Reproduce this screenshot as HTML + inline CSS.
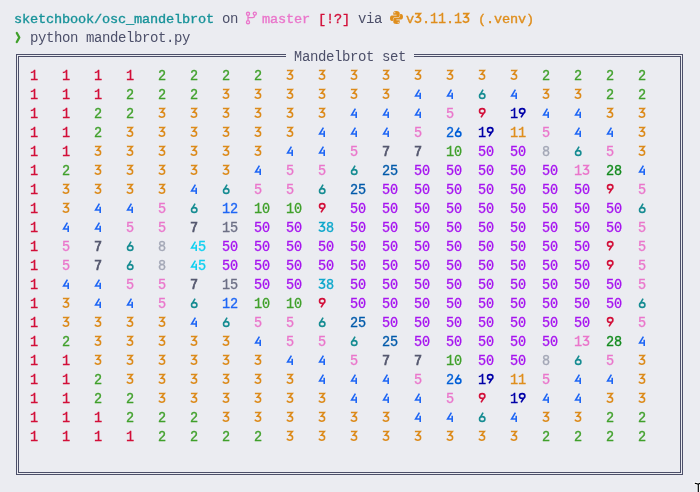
<!DOCTYPE html>
<html><head><meta charset="utf-8"><style>
html,body{margin:0;padding:0;}
body{width:700px;height:492px;overflow:hidden;background:#ebecf1;position:relative;font-family:"Liberation Mono",monospace;}
#w{position:absolute;left:0;top:0;width:700px;height:492px;will-change:transform;}
.t{position:absolute;white-space:pre;line-height:19px;}
.n{position:absolute;white-space:pre;font-size:15.00px;line-height:19px;letter-spacing:-0.11px;-webkit-text-stroke:0.35px currentColor;transform:scaleX(0.9);transform-origin:0 0;}
.g{position:absolute;overflow:visible;}
.g path{fill:none;stroke-width:1.6;}
.b{-webkit-text-stroke:0.35px currentColor;}
.box{position:absolute;border:1px solid #4c4f69;box-sizing:border-box;}
</style></head><body>
<div id="w">
<div class="t b" style="left:14px;top:9.88px;color:#179299;font-size:13.60px;letter-spacing:-0.16px">sketchbook/osc_mandelbrot</div>
<div class="t" style="left:222px;top:9.77px;color:#4c4f69;font-size:14.00px;letter-spacing:-0.40px">on</div>
<div class="t b" style="left:262px;top:9.88px;color:#ea76cb;font-size:13.60px;letter-spacing:-0.16px">master</div>
<div class="t b" style="left:318px;top:9.88px;color:#d20f39;font-size:13.60px;letter-spacing:-0.16px">[!?]</div>
<div class="t" style="left:358px;top:9.77px;color:#4c4f69;font-size:14.00px;letter-spacing:-0.40px">via</div>
<div class="t b" style="left:406px;top:9.88px;color:#df8e1d;font-size:13.60px;letter-spacing:-0.16px">v</div>
<svg class="g" style="left:414px;top:11px" width="8" height="14" viewBox="0 -12 8 14"><path d="M0.9 -9.45 H6.3 L3.4 -5.9 H3.8 C5.6 -5.9 6.6 -4.7 6.6 -3.2 C6.6 -1.6 5.4 -0.75 3.7 -0.75 C2.4 -0.75 1.4 -1.3 0.9 -2.3" stroke="#df8e1d" style="stroke-width:1.75"/></svg>
<div class="t b" style="left:422px;top:9.88px;color:#df8e1d;font-size:13.60px;letter-spacing:-0.16px">.</div>
<div class="t b" style="left:430.00px;top:9.56px;color:#df8e1d;font-size:14.80px;transform:scaleX(0.9);transform-origin:0 0">1</div>
<div class="t b" style="left:438.00px;top:9.56px;color:#df8e1d;font-size:14.80px;transform:scaleX(0.9);transform-origin:0 0">1</div>
<div class="t b" style="left:446px;top:9.88px;color:#df8e1d;font-size:13.60px;letter-spacing:-0.16px">.</div>
<div class="t b" style="left:454.00px;top:9.56px;color:#df8e1d;font-size:14.80px;transform:scaleX(0.9);transform-origin:0 0">1</div>
<svg class="g" style="left:462px;top:11px" width="8" height="14" viewBox="0 -12 8 14"><path d="M0.9 -9.45 H6.3 L3.4 -5.9 H3.8 C5.6 -5.9 6.6 -4.7 6.6 -3.2 C6.6 -1.6 5.4 -0.75 3.7 -0.75 C2.4 -0.75 1.4 -1.3 0.9 -2.3" stroke="#df8e1d" style="stroke-width:1.75"/></svg>
<div class="t b" style="left:470px;top:9.88px;color:#df8e1d;font-size:13.60px;letter-spacing:-0.16px"> (.venv)</div>
<svg style="position:absolute;left:14px;top:30px" width="8" height="15" viewBox="0 0 8 15"><path d="M2.8 3 L5.3 7.5 L2.8 12" fill="none" stroke="#40a02b" stroke-width="2.3" stroke-linecap="round" stroke-linejoin="round"/></svg>
<div class="t" style="left:30px;top:28.77px;color:#4c4f69;font-size:14.00px;letter-spacing:-0.40px">python mandelbrot.py</div>
<svg style="position:absolute;left:245px;top:11px" width="13" height="14" viewBox="0 0 13 14">
<g fill="none" stroke="#ea76cb" stroke-width="1.35">
<circle cx="3" cy="2.8" r="1.55"/><circle cx="9.8" cy="2.6" r="1.55"/><circle cx="3" cy="11.2" r="1.55"/>
<path d="M3 4.3 V9.6 M9.6 4.1 V5 Q9.4 6.6 7.8 6.6 H3"/>
</g></svg>
<svg style="position:absolute;left:389px;top:10px" width="15" height="15" viewBox="0 0 15 15">
<g fill="#df8e1d">
<path d="M7.3 1 C4.6 1 4.3 2 4.3 3.3 V4.8 H7.6 V5.4 H2.8 C1.6 5.4 1 6.6 1 8.2 C1 9.9 1.7 11 2.9 11 H3.9 V9.3 C3.9 8.1 4.9 7.2 6 7.2 H9 C10 7.2 10.7 6.4 10.7 5.4 V3.3 C10.7 2 9.8 1 7.3 1 Z"/>
<path d="M7.7 14 C10.4 14 10.7 13 10.7 11.7 V10.2 H7.4 V9.6 H12.2 C13.4 9.6 14 8.4 14 6.8 C14 5.1 13.3 4 12.1 4 H11.1 V5.7 C11.1 6.9 10.1 7.8 9 7.8 H6 C5 7.8 4.3 8.6 4.3 9.6 V11.7 C4.3 13 5.2 14 7.7 14 Z"/>
</g>
<circle cx="5.8" cy="2.7" r="0.6" fill="#ebecf1"/><circle cx="9.2" cy="12.3" r="0.6" fill="#ebecf1"/>
</svg>
<div class="box" style="left:16px;top:54px;width:667px;height:421px"></div>
<div class="box" style="left:18px;top:56px;width:663px;height:417px"></div>
<div style="position:absolute;left:286px;top:52px;width:128px;height:7px;background:#ebecf1"></div>
<div class="t" style="left:293.95px;top:47.51px;color:#4c4f69;font-size:15.00px;transform:scaleX(0.9);transform-origin:0 0">M</div>
<div class="t" style="left:302px;top:47.77px;color:#4c4f69;font-size:14.00px;letter-spacing:-0.40px">andelbrot set</div>
<div class="n" style="left:30px;top:66.51px;color:#d20f39">1</div>
<div class="n" style="left:62px;top:66.51px;color:#d20f39">1</div>
<div class="n" style="left:94px;top:66.51px;color:#d20f39">1</div>
<div class="n" style="left:126px;top:66.51px;color:#d20f39">1</div>
<div class="n" style="left:158px;top:66.51px;color:#40a02b">2</div>
<div class="n" style="left:190px;top:66.51px;color:#40a02b">2</div>
<div class="n" style="left:222px;top:66.51px;color:#40a02b">2</div>
<div class="n" style="left:254px;top:66.51px;color:#40a02b">2</div>
<svg class="g" style="left:286px;top:68px" width="8" height="14" viewBox="0 -12 8 14"><path d="M0.9 -9.45 H6.3 L3.4 -5.9 H3.8 C5.6 -5.9 6.6 -4.7 6.6 -3.2 C6.6 -1.6 5.4 -0.75 3.7 -0.75 C2.4 -0.75 1.4 -1.3 0.9 -2.3" stroke="#dc8a1a"/></svg>
<svg class="g" style="left:318px;top:68px" width="8" height="14" viewBox="0 -12 8 14"><path d="M0.9 -9.45 H6.3 L3.4 -5.9 H3.8 C5.6 -5.9 6.6 -4.7 6.6 -3.2 C6.6 -1.6 5.4 -0.75 3.7 -0.75 C2.4 -0.75 1.4 -1.3 0.9 -2.3" stroke="#dc8a1a"/></svg>
<svg class="g" style="left:350px;top:68px" width="8" height="14" viewBox="0 -12 8 14"><path d="M0.9 -9.45 H6.3 L3.4 -5.9 H3.8 C5.6 -5.9 6.6 -4.7 6.6 -3.2 C6.6 -1.6 5.4 -0.75 3.7 -0.75 C2.4 -0.75 1.4 -1.3 0.9 -2.3" stroke="#dc8a1a"/></svg>
<svg class="g" style="left:382px;top:68px" width="8" height="14" viewBox="0 -12 8 14"><path d="M0.9 -9.45 H6.3 L3.4 -5.9 H3.8 C5.6 -5.9 6.6 -4.7 6.6 -3.2 C6.6 -1.6 5.4 -0.75 3.7 -0.75 C2.4 -0.75 1.4 -1.3 0.9 -2.3" stroke="#dc8a1a"/></svg>
<svg class="g" style="left:414px;top:68px" width="8" height="14" viewBox="0 -12 8 14"><path d="M0.9 -9.45 H6.3 L3.4 -5.9 H3.8 C5.6 -5.9 6.6 -4.7 6.6 -3.2 C6.6 -1.6 5.4 -0.75 3.7 -0.75 C2.4 -0.75 1.4 -1.3 0.9 -2.3" stroke="#dc8a1a"/></svg>
<svg class="g" style="left:446px;top:68px" width="8" height="14" viewBox="0 -12 8 14"><path d="M0.9 -9.45 H6.3 L3.4 -5.9 H3.8 C5.6 -5.9 6.6 -4.7 6.6 -3.2 C6.6 -1.6 5.4 -0.75 3.7 -0.75 C2.4 -0.75 1.4 -1.3 0.9 -2.3" stroke="#dc8a1a"/></svg>
<svg class="g" style="left:478px;top:68px" width="8" height="14" viewBox="0 -12 8 14"><path d="M0.9 -9.45 H6.3 L3.4 -5.9 H3.8 C5.6 -5.9 6.6 -4.7 6.6 -3.2 C6.6 -1.6 5.4 -0.75 3.7 -0.75 C2.4 -0.75 1.4 -1.3 0.9 -2.3" stroke="#dc8a1a"/></svg>
<svg class="g" style="left:510px;top:68px" width="8" height="14" viewBox="0 -12 8 14"><path d="M0.9 -9.45 H6.3 L3.4 -5.9 H3.8 C5.6 -5.9 6.6 -4.7 6.6 -3.2 C6.6 -1.6 5.4 -0.75 3.7 -0.75 C2.4 -0.75 1.4 -1.3 0.9 -2.3" stroke="#dc8a1a"/></svg>
<div class="n" style="left:542px;top:66.51px;color:#40a02b">2</div>
<div class="n" style="left:574px;top:66.51px;color:#40a02b">2</div>
<div class="n" style="left:606px;top:66.51px;color:#40a02b">2</div>
<div class="n" style="left:638px;top:66.51px;color:#40a02b">2</div>
<div class="n" style="left:30px;top:85.51px;color:#d20f39">1</div>
<div class="n" style="left:62px;top:85.51px;color:#d20f39">1</div>
<div class="n" style="left:94px;top:85.51px;color:#d20f39">1</div>
<div class="n" style="left:126px;top:85.51px;color:#40a02b">2</div>
<div class="n" style="left:158px;top:85.51px;color:#40a02b">2</div>
<div class="n" style="left:190px;top:85.51px;color:#40a02b">2</div>
<svg class="g" style="left:222px;top:87px" width="8" height="14" viewBox="0 -12 8 14"><path d="M0.9 -9.45 H6.3 L3.4 -5.9 H3.8 C5.6 -5.9 6.6 -4.7 6.6 -3.2 C6.6 -1.6 5.4 -0.75 3.7 -0.75 C2.4 -0.75 1.4 -1.3 0.9 -2.3" stroke="#dc8a1a"/></svg>
<svg class="g" style="left:254px;top:87px" width="8" height="14" viewBox="0 -12 8 14"><path d="M0.9 -9.45 H6.3 L3.4 -5.9 H3.8 C5.6 -5.9 6.6 -4.7 6.6 -3.2 C6.6 -1.6 5.4 -0.75 3.7 -0.75 C2.4 -0.75 1.4 -1.3 0.9 -2.3" stroke="#dc8a1a"/></svg>
<svg class="g" style="left:286px;top:87px" width="8" height="14" viewBox="0 -12 8 14"><path d="M0.9 -9.45 H6.3 L3.4 -5.9 H3.8 C5.6 -5.9 6.6 -4.7 6.6 -3.2 C6.6 -1.6 5.4 -0.75 3.7 -0.75 C2.4 -0.75 1.4 -1.3 0.9 -2.3" stroke="#dc8a1a"/></svg>
<svg class="g" style="left:318px;top:87px" width="8" height="14" viewBox="0 -12 8 14"><path d="M0.9 -9.45 H6.3 L3.4 -5.9 H3.8 C5.6 -5.9 6.6 -4.7 6.6 -3.2 C6.6 -1.6 5.4 -0.75 3.7 -0.75 C2.4 -0.75 1.4 -1.3 0.9 -2.3" stroke="#dc8a1a"/></svg>
<svg class="g" style="left:350px;top:87px" width="8" height="14" viewBox="0 -12 8 14"><path d="M0.9 -9.45 H6.3 L3.4 -5.9 H3.8 C5.6 -5.9 6.6 -4.7 6.6 -3.2 C6.6 -1.6 5.4 -0.75 3.7 -0.75 C2.4 -0.75 1.4 -1.3 0.9 -2.3" stroke="#dc8a1a"/></svg>
<svg class="g" style="left:382px;top:87px" width="8" height="14" viewBox="0 -12 8 14"><path d="M0.9 -9.45 H6.3 L3.4 -5.9 H3.8 C5.6 -5.9 6.6 -4.7 6.6 -3.2 C6.6 -1.6 5.4 -0.75 3.7 -0.75 C2.4 -0.75 1.4 -1.3 0.9 -2.3" stroke="#dc8a1a"/></svg>
<svg class="g" style="left:414px;top:87px" width="8" height="14" viewBox="0 -12 8 14"><path d="M5.4 -9.4 L1.6 -3.0 H6.9 M6.2 -6.2 V0" stroke="#1e66f5"/></svg>
<svg class="g" style="left:446px;top:87px" width="8" height="14" viewBox="0 -12 8 14"><path d="M5.4 -9.4 L1.6 -3.0 H6.9 M6.2 -6.2 V0" stroke="#1e66f5"/></svg>
<svg class="g" style="left:478px;top:87px" width="8" height="14" viewBox="0 -12 8 14"><path d="M5.1 -9.4 L1.8 -3.9 M1.5 -3.0 A2.7 2.4 0 1 0 6.9 -3.0 A2.7 2.4 0 1 0 1.5 -3.0" stroke="#168c92"/></svg>
<svg class="g" style="left:510px;top:87px" width="8" height="14" viewBox="0 -12 8 14"><path d="M5.4 -9.4 L1.6 -3.0 H6.9 M6.2 -6.2 V0" stroke="#1e66f5"/></svg>
<svg class="g" style="left:542px;top:87px" width="8" height="14" viewBox="0 -12 8 14"><path d="M0.9 -9.45 H6.3 L3.4 -5.9 H3.8 C5.6 -5.9 6.6 -4.7 6.6 -3.2 C6.6 -1.6 5.4 -0.75 3.7 -0.75 C2.4 -0.75 1.4 -1.3 0.9 -2.3" stroke="#dc8a1a"/></svg>
<svg class="g" style="left:574px;top:87px" width="8" height="14" viewBox="0 -12 8 14"><path d="M0.9 -9.45 H6.3 L3.4 -5.9 H3.8 C5.6 -5.9 6.6 -4.7 6.6 -3.2 C6.6 -1.6 5.4 -0.75 3.7 -0.75 C2.4 -0.75 1.4 -1.3 0.9 -2.3" stroke="#dc8a1a"/></svg>
<div class="n" style="left:606px;top:85.51px;color:#40a02b">2</div>
<div class="n" style="left:638px;top:85.51px;color:#40a02b">2</div>
<div class="n" style="left:30px;top:104.51px;color:#d20f39">1</div>
<div class="n" style="left:62px;top:104.51px;color:#d20f39">1</div>
<div class="n" style="left:94px;top:104.51px;color:#40a02b">2</div>
<div class="n" style="left:126px;top:104.51px;color:#40a02b">2</div>
<svg class="g" style="left:158px;top:106px" width="8" height="14" viewBox="0 -12 8 14"><path d="M0.9 -9.45 H6.3 L3.4 -5.9 H3.8 C5.6 -5.9 6.6 -4.7 6.6 -3.2 C6.6 -1.6 5.4 -0.75 3.7 -0.75 C2.4 -0.75 1.4 -1.3 0.9 -2.3" stroke="#dc8a1a"/></svg>
<svg class="g" style="left:190px;top:106px" width="8" height="14" viewBox="0 -12 8 14"><path d="M0.9 -9.45 H6.3 L3.4 -5.9 H3.8 C5.6 -5.9 6.6 -4.7 6.6 -3.2 C6.6 -1.6 5.4 -0.75 3.7 -0.75 C2.4 -0.75 1.4 -1.3 0.9 -2.3" stroke="#dc8a1a"/></svg>
<svg class="g" style="left:222px;top:106px" width="8" height="14" viewBox="0 -12 8 14"><path d="M0.9 -9.45 H6.3 L3.4 -5.9 H3.8 C5.6 -5.9 6.6 -4.7 6.6 -3.2 C6.6 -1.6 5.4 -0.75 3.7 -0.75 C2.4 -0.75 1.4 -1.3 0.9 -2.3" stroke="#dc8a1a"/></svg>
<svg class="g" style="left:254px;top:106px" width="8" height="14" viewBox="0 -12 8 14"><path d="M0.9 -9.45 H6.3 L3.4 -5.9 H3.8 C5.6 -5.9 6.6 -4.7 6.6 -3.2 C6.6 -1.6 5.4 -0.75 3.7 -0.75 C2.4 -0.75 1.4 -1.3 0.9 -2.3" stroke="#dc8a1a"/></svg>
<svg class="g" style="left:286px;top:106px" width="8" height="14" viewBox="0 -12 8 14"><path d="M0.9 -9.45 H6.3 L3.4 -5.9 H3.8 C5.6 -5.9 6.6 -4.7 6.6 -3.2 C6.6 -1.6 5.4 -0.75 3.7 -0.75 C2.4 -0.75 1.4 -1.3 0.9 -2.3" stroke="#dc8a1a"/></svg>
<svg class="g" style="left:318px;top:106px" width="8" height="14" viewBox="0 -12 8 14"><path d="M0.9 -9.45 H6.3 L3.4 -5.9 H3.8 C5.6 -5.9 6.6 -4.7 6.6 -3.2 C6.6 -1.6 5.4 -0.75 3.7 -0.75 C2.4 -0.75 1.4 -1.3 0.9 -2.3" stroke="#dc8a1a"/></svg>
<svg class="g" style="left:350px;top:106px" width="8" height="14" viewBox="0 -12 8 14"><path d="M5.4 -9.4 L1.6 -3.0 H6.9 M6.2 -6.2 V0" stroke="#1e66f5"/></svg>
<svg class="g" style="left:382px;top:106px" width="8" height="14" viewBox="0 -12 8 14"><path d="M5.4 -9.4 L1.6 -3.0 H6.9 M6.2 -6.2 V0" stroke="#1e66f5"/></svg>
<svg class="g" style="left:414px;top:106px" width="8" height="14" viewBox="0 -12 8 14"><path d="M5.4 -9.4 L1.6 -3.0 H6.9 M6.2 -6.2 V0" stroke="#1e66f5"/></svg>
<div class="n" style="left:446px;top:104.51px;color:#ea76cb">5</div>
<svg class="g" style="left:478px;top:106px" width="8" height="14" viewBox="0 -12 8 14"><path d="M1.5 -7.0 A2.7 2.4 0 1 0 6.9 -7.0 A2.7 2.4 0 1 0 1.5 -7.0 M6.7 -6.2 L3.0 -0.6" stroke="#d20f39"/></svg>
<div class="n" style="left:510px;top:104.51px;color:#0000a8">1</div>
<svg class="g" style="left:518px;top:106px" width="8" height="14" viewBox="0 -12 8 14"><path d="M1.5 -7.0 A2.7 2.4 0 1 0 6.9 -7.0 A2.7 2.4 0 1 0 1.5 -7.0 M6.7 -6.2 L3.0 -0.6" stroke="#0000a8"/></svg>
<svg class="g" style="left:542px;top:106px" width="8" height="14" viewBox="0 -12 8 14"><path d="M5.4 -9.4 L1.6 -3.0 H6.9 M6.2 -6.2 V0" stroke="#1e66f5"/></svg>
<svg class="g" style="left:574px;top:106px" width="8" height="14" viewBox="0 -12 8 14"><path d="M5.4 -9.4 L1.6 -3.0 H6.9 M6.2 -6.2 V0" stroke="#1e66f5"/></svg>
<svg class="g" style="left:606px;top:106px" width="8" height="14" viewBox="0 -12 8 14"><path d="M0.9 -9.45 H6.3 L3.4 -5.9 H3.8 C5.6 -5.9 6.6 -4.7 6.6 -3.2 C6.6 -1.6 5.4 -0.75 3.7 -0.75 C2.4 -0.75 1.4 -1.3 0.9 -2.3" stroke="#dc8a1a"/></svg>
<svg class="g" style="left:638px;top:106px" width="8" height="14" viewBox="0 -12 8 14"><path d="M0.9 -9.45 H6.3 L3.4 -5.9 H3.8 C5.6 -5.9 6.6 -4.7 6.6 -3.2 C6.6 -1.6 5.4 -0.75 3.7 -0.75 C2.4 -0.75 1.4 -1.3 0.9 -2.3" stroke="#dc8a1a"/></svg>
<div class="n" style="left:30px;top:123.51px;color:#d20f39">1</div>
<div class="n" style="left:62px;top:123.51px;color:#d20f39">1</div>
<div class="n" style="left:94px;top:123.51px;color:#40a02b">2</div>
<svg class="g" style="left:126px;top:125px" width="8" height="14" viewBox="0 -12 8 14"><path d="M0.9 -9.45 H6.3 L3.4 -5.9 H3.8 C5.6 -5.9 6.6 -4.7 6.6 -3.2 C6.6 -1.6 5.4 -0.75 3.7 -0.75 C2.4 -0.75 1.4 -1.3 0.9 -2.3" stroke="#dc8a1a"/></svg>
<svg class="g" style="left:158px;top:125px" width="8" height="14" viewBox="0 -12 8 14"><path d="M0.9 -9.45 H6.3 L3.4 -5.9 H3.8 C5.6 -5.9 6.6 -4.7 6.6 -3.2 C6.6 -1.6 5.4 -0.75 3.7 -0.75 C2.4 -0.75 1.4 -1.3 0.9 -2.3" stroke="#dc8a1a"/></svg>
<svg class="g" style="left:190px;top:125px" width="8" height="14" viewBox="0 -12 8 14"><path d="M0.9 -9.45 H6.3 L3.4 -5.9 H3.8 C5.6 -5.9 6.6 -4.7 6.6 -3.2 C6.6 -1.6 5.4 -0.75 3.7 -0.75 C2.4 -0.75 1.4 -1.3 0.9 -2.3" stroke="#dc8a1a"/></svg>
<svg class="g" style="left:222px;top:125px" width="8" height="14" viewBox="0 -12 8 14"><path d="M0.9 -9.45 H6.3 L3.4 -5.9 H3.8 C5.6 -5.9 6.6 -4.7 6.6 -3.2 C6.6 -1.6 5.4 -0.75 3.7 -0.75 C2.4 -0.75 1.4 -1.3 0.9 -2.3" stroke="#dc8a1a"/></svg>
<svg class="g" style="left:254px;top:125px" width="8" height="14" viewBox="0 -12 8 14"><path d="M0.9 -9.45 H6.3 L3.4 -5.9 H3.8 C5.6 -5.9 6.6 -4.7 6.6 -3.2 C6.6 -1.6 5.4 -0.75 3.7 -0.75 C2.4 -0.75 1.4 -1.3 0.9 -2.3" stroke="#dc8a1a"/></svg>
<svg class="g" style="left:286px;top:125px" width="8" height="14" viewBox="0 -12 8 14"><path d="M0.9 -9.45 H6.3 L3.4 -5.9 H3.8 C5.6 -5.9 6.6 -4.7 6.6 -3.2 C6.6 -1.6 5.4 -0.75 3.7 -0.75 C2.4 -0.75 1.4 -1.3 0.9 -2.3" stroke="#dc8a1a"/></svg>
<svg class="g" style="left:318px;top:125px" width="8" height="14" viewBox="0 -12 8 14"><path d="M5.4 -9.4 L1.6 -3.0 H6.9 M6.2 -6.2 V0" stroke="#1e66f5"/></svg>
<svg class="g" style="left:350px;top:125px" width="8" height="14" viewBox="0 -12 8 14"><path d="M5.4 -9.4 L1.6 -3.0 H6.9 M6.2 -6.2 V0" stroke="#1e66f5"/></svg>
<svg class="g" style="left:382px;top:125px" width="8" height="14" viewBox="0 -12 8 14"><path d="M5.4 -9.4 L1.6 -3.0 H6.9 M6.2 -6.2 V0" stroke="#1e66f5"/></svg>
<div class="n" style="left:414px;top:123.51px;color:#ea76cb">5</div>
<div class="n" style="left:446px;top:123.51px;color:#005fd7">2</div>
<svg class="g" style="left:454px;top:125px" width="8" height="14" viewBox="0 -12 8 14"><path d="M5.1 -9.4 L1.8 -3.9 M1.5 -3.0 A2.7 2.4 0 1 0 6.9 -3.0 A2.7 2.4 0 1 0 1.5 -3.0" stroke="#005fd7"/></svg>
<div class="n" style="left:478px;top:123.51px;color:#0000a8">1</div>
<svg class="g" style="left:486px;top:125px" width="8" height="14" viewBox="0 -12 8 14"><path d="M1.5 -7.0 A2.7 2.4 0 1 0 6.9 -7.0 A2.7 2.4 0 1 0 1.5 -7.0 M6.7 -6.2 L3.0 -0.6" stroke="#0000a8"/></svg>
<div class="n" style="left:510px;top:123.51px;color:#df8e1d">1</div>
<div class="n" style="left:518px;top:123.51px;color:#df8e1d">1</div>
<div class="n" style="left:542px;top:123.51px;color:#ea76cb">5</div>
<svg class="g" style="left:574px;top:125px" width="8" height="14" viewBox="0 -12 8 14"><path d="M5.4 -9.4 L1.6 -3.0 H6.9 M6.2 -6.2 V0" stroke="#1e66f5"/></svg>
<svg class="g" style="left:606px;top:125px" width="8" height="14" viewBox="0 -12 8 14"><path d="M5.4 -9.4 L1.6 -3.0 H6.9 M6.2 -6.2 V0" stroke="#1e66f5"/></svg>
<svg class="g" style="left:638px;top:125px" width="8" height="14" viewBox="0 -12 8 14"><path d="M0.9 -9.45 H6.3 L3.4 -5.9 H3.8 C5.6 -5.9 6.6 -4.7 6.6 -3.2 C6.6 -1.6 5.4 -0.75 3.7 -0.75 C2.4 -0.75 1.4 -1.3 0.9 -2.3" stroke="#dc8a1a"/></svg>
<div class="n" style="left:30px;top:142.51px;color:#d20f39">1</div>
<div class="n" style="left:62px;top:142.51px;color:#d20f39">1</div>
<svg class="g" style="left:94px;top:144px" width="8" height="14" viewBox="0 -12 8 14"><path d="M0.9 -9.45 H6.3 L3.4 -5.9 H3.8 C5.6 -5.9 6.6 -4.7 6.6 -3.2 C6.6 -1.6 5.4 -0.75 3.7 -0.75 C2.4 -0.75 1.4 -1.3 0.9 -2.3" stroke="#dc8a1a"/></svg>
<svg class="g" style="left:126px;top:144px" width="8" height="14" viewBox="0 -12 8 14"><path d="M0.9 -9.45 H6.3 L3.4 -5.9 H3.8 C5.6 -5.9 6.6 -4.7 6.6 -3.2 C6.6 -1.6 5.4 -0.75 3.7 -0.75 C2.4 -0.75 1.4 -1.3 0.9 -2.3" stroke="#dc8a1a"/></svg>
<svg class="g" style="left:158px;top:144px" width="8" height="14" viewBox="0 -12 8 14"><path d="M0.9 -9.45 H6.3 L3.4 -5.9 H3.8 C5.6 -5.9 6.6 -4.7 6.6 -3.2 C6.6 -1.6 5.4 -0.75 3.7 -0.75 C2.4 -0.75 1.4 -1.3 0.9 -2.3" stroke="#dc8a1a"/></svg>
<svg class="g" style="left:190px;top:144px" width="8" height="14" viewBox="0 -12 8 14"><path d="M0.9 -9.45 H6.3 L3.4 -5.9 H3.8 C5.6 -5.9 6.6 -4.7 6.6 -3.2 C6.6 -1.6 5.4 -0.75 3.7 -0.75 C2.4 -0.75 1.4 -1.3 0.9 -2.3" stroke="#dc8a1a"/></svg>
<svg class="g" style="left:222px;top:144px" width="8" height="14" viewBox="0 -12 8 14"><path d="M0.9 -9.45 H6.3 L3.4 -5.9 H3.8 C5.6 -5.9 6.6 -4.7 6.6 -3.2 C6.6 -1.6 5.4 -0.75 3.7 -0.75 C2.4 -0.75 1.4 -1.3 0.9 -2.3" stroke="#dc8a1a"/></svg>
<svg class="g" style="left:254px;top:144px" width="8" height="14" viewBox="0 -12 8 14"><path d="M0.9 -9.45 H6.3 L3.4 -5.9 H3.8 C5.6 -5.9 6.6 -4.7 6.6 -3.2 C6.6 -1.6 5.4 -0.75 3.7 -0.75 C2.4 -0.75 1.4 -1.3 0.9 -2.3" stroke="#dc8a1a"/></svg>
<svg class="g" style="left:286px;top:144px" width="8" height="14" viewBox="0 -12 8 14"><path d="M5.4 -9.4 L1.6 -3.0 H6.9 M6.2 -6.2 V0" stroke="#1e66f5"/></svg>
<svg class="g" style="left:318px;top:144px" width="8" height="14" viewBox="0 -12 8 14"><path d="M5.4 -9.4 L1.6 -3.0 H6.9 M6.2 -6.2 V0" stroke="#1e66f5"/></svg>
<div class="n" style="left:350px;top:142.51px;color:#ea76cb">5</div>
<div class="n" style="left:382px;top:142.51px;color:#55586f;-webkit-text-stroke-width:0.7px">7</div>
<div class="n" style="left:414px;top:142.51px;color:#55586f;-webkit-text-stroke-width:0.7px">7</div>
<div class="n" style="left:446px;top:142.51px;color:#40a02b">1</div>
<div class="n" style="left:454px;top:142.51px;color:#40a02b">0</div>
<div class="n" style="left:478px;top:142.51px;color:#a614ef">5</div>
<div class="n" style="left:486px;top:142.51px;color:#a614ef">0</div>
<div class="n" style="left:510px;top:142.51px;color:#a614ef">5</div>
<div class="n" style="left:518px;top:142.51px;color:#a614ef">0</div>
<div class="n" style="left:542px;top:142.51px;color:#a3a7b6">8</div>
<svg class="g" style="left:574px;top:144px" width="8" height="14" viewBox="0 -12 8 14"><path d="M5.1 -9.4 L1.8 -3.9 M1.5 -3.0 A2.7 2.4 0 1 0 6.9 -3.0 A2.7 2.4 0 1 0 1.5 -3.0" stroke="#168c92"/></svg>
<div class="n" style="left:606px;top:142.51px;color:#ea76cb">5</div>
<svg class="g" style="left:638px;top:144px" width="8" height="14" viewBox="0 -12 8 14"><path d="M0.9 -9.45 H6.3 L3.4 -5.9 H3.8 C5.6 -5.9 6.6 -4.7 6.6 -3.2 C6.6 -1.6 5.4 -0.75 3.7 -0.75 C2.4 -0.75 1.4 -1.3 0.9 -2.3" stroke="#dc8a1a"/></svg>
<div class="n" style="left:30px;top:161.51px;color:#d20f39">1</div>
<div class="n" style="left:62px;top:161.51px;color:#40a02b">2</div>
<svg class="g" style="left:94px;top:163px" width="8" height="14" viewBox="0 -12 8 14"><path d="M0.9 -9.45 H6.3 L3.4 -5.9 H3.8 C5.6 -5.9 6.6 -4.7 6.6 -3.2 C6.6 -1.6 5.4 -0.75 3.7 -0.75 C2.4 -0.75 1.4 -1.3 0.9 -2.3" stroke="#dc8a1a"/></svg>
<svg class="g" style="left:126px;top:163px" width="8" height="14" viewBox="0 -12 8 14"><path d="M0.9 -9.45 H6.3 L3.4 -5.9 H3.8 C5.6 -5.9 6.6 -4.7 6.6 -3.2 C6.6 -1.6 5.4 -0.75 3.7 -0.75 C2.4 -0.75 1.4 -1.3 0.9 -2.3" stroke="#dc8a1a"/></svg>
<svg class="g" style="left:158px;top:163px" width="8" height="14" viewBox="0 -12 8 14"><path d="M0.9 -9.45 H6.3 L3.4 -5.9 H3.8 C5.6 -5.9 6.6 -4.7 6.6 -3.2 C6.6 -1.6 5.4 -0.75 3.7 -0.75 C2.4 -0.75 1.4 -1.3 0.9 -2.3" stroke="#dc8a1a"/></svg>
<svg class="g" style="left:190px;top:163px" width="8" height="14" viewBox="0 -12 8 14"><path d="M0.9 -9.45 H6.3 L3.4 -5.9 H3.8 C5.6 -5.9 6.6 -4.7 6.6 -3.2 C6.6 -1.6 5.4 -0.75 3.7 -0.75 C2.4 -0.75 1.4 -1.3 0.9 -2.3" stroke="#dc8a1a"/></svg>
<svg class="g" style="left:222px;top:163px" width="8" height="14" viewBox="0 -12 8 14"><path d="M0.9 -9.45 H6.3 L3.4 -5.9 H3.8 C5.6 -5.9 6.6 -4.7 6.6 -3.2 C6.6 -1.6 5.4 -0.75 3.7 -0.75 C2.4 -0.75 1.4 -1.3 0.9 -2.3" stroke="#dc8a1a"/></svg>
<svg class="g" style="left:254px;top:163px" width="8" height="14" viewBox="0 -12 8 14"><path d="M5.4 -9.4 L1.6 -3.0 H6.9 M6.2 -6.2 V0" stroke="#1e66f5"/></svg>
<div class="n" style="left:286px;top:161.51px;color:#ea76cb">5</div>
<div class="n" style="left:318px;top:161.51px;color:#ea76cb">5</div>
<svg class="g" style="left:350px;top:163px" width="8" height="14" viewBox="0 -12 8 14"><path d="M5.1 -9.4 L1.8 -3.9 M1.5 -3.0 A2.7 2.4 0 1 0 6.9 -3.0 A2.7 2.4 0 1 0 1.5 -3.0" stroke="#168c92"/></svg>
<div class="n" style="left:382px;top:161.51px;color:#005aaa">2</div>
<div class="n" style="left:390px;top:161.51px;color:#005aaa">5</div>
<div class="n" style="left:414px;top:161.51px;color:#a614ef">5</div>
<div class="n" style="left:422px;top:161.51px;color:#a614ef">0</div>
<div class="n" style="left:446px;top:161.51px;color:#a614ef">5</div>
<div class="n" style="left:454px;top:161.51px;color:#a614ef">0</div>
<div class="n" style="left:478px;top:161.51px;color:#a614ef">5</div>
<div class="n" style="left:486px;top:161.51px;color:#a614ef">0</div>
<div class="n" style="left:510px;top:161.51px;color:#a614ef">5</div>
<div class="n" style="left:518px;top:161.51px;color:#a614ef">0</div>
<div class="n" style="left:542px;top:161.51px;color:#a614ef">5</div>
<div class="n" style="left:550px;top:161.51px;color:#a614ef">0</div>
<div class="n" style="left:574px;top:161.51px;color:#ea76cb">1</div>
<svg class="g" style="left:582px;top:163px" width="8" height="14" viewBox="0 -12 8 14"><path d="M0.9 -9.45 H6.3 L3.4 -5.9 H3.8 C5.6 -5.9 6.6 -4.7 6.6 -3.2 C6.6 -1.6 5.4 -0.75 3.7 -0.75 C2.4 -0.75 1.4 -1.3 0.9 -2.3" stroke="#ea76cb"/></svg>
<div class="n" style="left:606px;top:161.51px;color:#138a1e">2</div>
<div class="n" style="left:614px;top:161.51px;color:#138a1e">8</div>
<svg class="g" style="left:638px;top:163px" width="8" height="14" viewBox="0 -12 8 14"><path d="M5.4 -9.4 L1.6 -3.0 H6.9 M6.2 -6.2 V0" stroke="#1e66f5"/></svg>
<div class="n" style="left:30px;top:180.51px;color:#d20f39">1</div>
<svg class="g" style="left:62px;top:182px" width="8" height="14" viewBox="0 -12 8 14"><path d="M0.9 -9.45 H6.3 L3.4 -5.9 H3.8 C5.6 -5.9 6.6 -4.7 6.6 -3.2 C6.6 -1.6 5.4 -0.75 3.7 -0.75 C2.4 -0.75 1.4 -1.3 0.9 -2.3" stroke="#dc8a1a"/></svg>
<svg class="g" style="left:94px;top:182px" width="8" height="14" viewBox="0 -12 8 14"><path d="M0.9 -9.45 H6.3 L3.4 -5.9 H3.8 C5.6 -5.9 6.6 -4.7 6.6 -3.2 C6.6 -1.6 5.4 -0.75 3.7 -0.75 C2.4 -0.75 1.4 -1.3 0.9 -2.3" stroke="#dc8a1a"/></svg>
<svg class="g" style="left:126px;top:182px" width="8" height="14" viewBox="0 -12 8 14"><path d="M0.9 -9.45 H6.3 L3.4 -5.9 H3.8 C5.6 -5.9 6.6 -4.7 6.6 -3.2 C6.6 -1.6 5.4 -0.75 3.7 -0.75 C2.4 -0.75 1.4 -1.3 0.9 -2.3" stroke="#dc8a1a"/></svg>
<svg class="g" style="left:158px;top:182px" width="8" height="14" viewBox="0 -12 8 14"><path d="M0.9 -9.45 H6.3 L3.4 -5.9 H3.8 C5.6 -5.9 6.6 -4.7 6.6 -3.2 C6.6 -1.6 5.4 -0.75 3.7 -0.75 C2.4 -0.75 1.4 -1.3 0.9 -2.3" stroke="#dc8a1a"/></svg>
<svg class="g" style="left:190px;top:182px" width="8" height="14" viewBox="0 -12 8 14"><path d="M5.4 -9.4 L1.6 -3.0 H6.9 M6.2 -6.2 V0" stroke="#1e66f5"/></svg>
<svg class="g" style="left:222px;top:182px" width="8" height="14" viewBox="0 -12 8 14"><path d="M5.1 -9.4 L1.8 -3.9 M1.5 -3.0 A2.7 2.4 0 1 0 6.9 -3.0 A2.7 2.4 0 1 0 1.5 -3.0" stroke="#168c92"/></svg>
<div class="n" style="left:254px;top:180.51px;color:#ea76cb">5</div>
<div class="n" style="left:286px;top:180.51px;color:#ea76cb">5</div>
<svg class="g" style="left:318px;top:182px" width="8" height="14" viewBox="0 -12 8 14"><path d="M5.1 -9.4 L1.8 -3.9 M1.5 -3.0 A2.7 2.4 0 1 0 6.9 -3.0 A2.7 2.4 0 1 0 1.5 -3.0" stroke="#168c92"/></svg>
<div class="n" style="left:350px;top:180.51px;color:#005aaa">2</div>
<div class="n" style="left:358px;top:180.51px;color:#005aaa">5</div>
<div class="n" style="left:382px;top:180.51px;color:#a614ef">5</div>
<div class="n" style="left:390px;top:180.51px;color:#a614ef">0</div>
<div class="n" style="left:414px;top:180.51px;color:#a614ef">5</div>
<div class="n" style="left:422px;top:180.51px;color:#a614ef">0</div>
<div class="n" style="left:446px;top:180.51px;color:#a614ef">5</div>
<div class="n" style="left:454px;top:180.51px;color:#a614ef">0</div>
<div class="n" style="left:478px;top:180.51px;color:#a614ef">5</div>
<div class="n" style="left:486px;top:180.51px;color:#a614ef">0</div>
<div class="n" style="left:510px;top:180.51px;color:#a614ef">5</div>
<div class="n" style="left:518px;top:180.51px;color:#a614ef">0</div>
<div class="n" style="left:542px;top:180.51px;color:#a614ef">5</div>
<div class="n" style="left:550px;top:180.51px;color:#a614ef">0</div>
<div class="n" style="left:574px;top:180.51px;color:#a614ef">5</div>
<div class="n" style="left:582px;top:180.51px;color:#a614ef">0</div>
<svg class="g" style="left:606px;top:182px" width="8" height="14" viewBox="0 -12 8 14"><path d="M1.5 -7.0 A2.7 2.4 0 1 0 6.9 -7.0 A2.7 2.4 0 1 0 1.5 -7.0 M6.7 -6.2 L3.0 -0.6" stroke="#d20f39"/></svg>
<div class="n" style="left:638px;top:180.51px;color:#ea76cb">5</div>
<div class="n" style="left:30px;top:199.51px;color:#d20f39">1</div>
<svg class="g" style="left:62px;top:201px" width="8" height="14" viewBox="0 -12 8 14"><path d="M0.9 -9.45 H6.3 L3.4 -5.9 H3.8 C5.6 -5.9 6.6 -4.7 6.6 -3.2 C6.6 -1.6 5.4 -0.75 3.7 -0.75 C2.4 -0.75 1.4 -1.3 0.9 -2.3" stroke="#dc8a1a"/></svg>
<svg class="g" style="left:94px;top:201px" width="8" height="14" viewBox="0 -12 8 14"><path d="M5.4 -9.4 L1.6 -3.0 H6.9 M6.2 -6.2 V0" stroke="#1e66f5"/></svg>
<svg class="g" style="left:126px;top:201px" width="8" height="14" viewBox="0 -12 8 14"><path d="M5.4 -9.4 L1.6 -3.0 H6.9 M6.2 -6.2 V0" stroke="#1e66f5"/></svg>
<div class="n" style="left:158px;top:199.51px;color:#ea76cb">5</div>
<svg class="g" style="left:190px;top:201px" width="8" height="14" viewBox="0 -12 8 14"><path d="M5.1 -9.4 L1.8 -3.9 M1.5 -3.0 A2.7 2.4 0 1 0 6.9 -3.0 A2.7 2.4 0 1 0 1.5 -3.0" stroke="#168c92"/></svg>
<div class="n" style="left:222px;top:199.51px;color:#1e66f5">1</div>
<div class="n" style="left:230px;top:199.51px;color:#1e66f5">2</div>
<div class="n" style="left:254px;top:199.51px;color:#40a02b">1</div>
<div class="n" style="left:262px;top:199.51px;color:#40a02b">0</div>
<div class="n" style="left:286px;top:199.51px;color:#40a02b">1</div>
<div class="n" style="left:294px;top:199.51px;color:#40a02b">0</div>
<svg class="g" style="left:318px;top:201px" width="8" height="14" viewBox="0 -12 8 14"><path d="M1.5 -7.0 A2.7 2.4 0 1 0 6.9 -7.0 A2.7 2.4 0 1 0 1.5 -7.0 M6.7 -6.2 L3.0 -0.6" stroke="#d20f39"/></svg>
<div class="n" style="left:350px;top:199.51px;color:#a614ef">5</div>
<div class="n" style="left:358px;top:199.51px;color:#a614ef">0</div>
<div class="n" style="left:382px;top:199.51px;color:#a614ef">5</div>
<div class="n" style="left:390px;top:199.51px;color:#a614ef">0</div>
<div class="n" style="left:414px;top:199.51px;color:#a614ef">5</div>
<div class="n" style="left:422px;top:199.51px;color:#a614ef">0</div>
<div class="n" style="left:446px;top:199.51px;color:#a614ef">5</div>
<div class="n" style="left:454px;top:199.51px;color:#a614ef">0</div>
<div class="n" style="left:478px;top:199.51px;color:#a614ef">5</div>
<div class="n" style="left:486px;top:199.51px;color:#a614ef">0</div>
<div class="n" style="left:510px;top:199.51px;color:#a614ef">5</div>
<div class="n" style="left:518px;top:199.51px;color:#a614ef">0</div>
<div class="n" style="left:542px;top:199.51px;color:#a614ef">5</div>
<div class="n" style="left:550px;top:199.51px;color:#a614ef">0</div>
<div class="n" style="left:574px;top:199.51px;color:#a614ef">5</div>
<div class="n" style="left:582px;top:199.51px;color:#a614ef">0</div>
<div class="n" style="left:606px;top:199.51px;color:#a614ef">5</div>
<div class="n" style="left:614px;top:199.51px;color:#a614ef">0</div>
<svg class="g" style="left:638px;top:201px" width="8" height="14" viewBox="0 -12 8 14"><path d="M5.1 -9.4 L1.8 -3.9 M1.5 -3.0 A2.7 2.4 0 1 0 6.9 -3.0 A2.7 2.4 0 1 0 1.5 -3.0" stroke="#168c92"/></svg>
<div class="n" style="left:30px;top:218.51px;color:#d20f39">1</div>
<svg class="g" style="left:62px;top:220px" width="8" height="14" viewBox="0 -12 8 14"><path d="M5.4 -9.4 L1.6 -3.0 H6.9 M6.2 -6.2 V0" stroke="#1e66f5"/></svg>
<svg class="g" style="left:94px;top:220px" width="8" height="14" viewBox="0 -12 8 14"><path d="M5.4 -9.4 L1.6 -3.0 H6.9 M6.2 -6.2 V0" stroke="#1e66f5"/></svg>
<div class="n" style="left:126px;top:218.51px;color:#ea76cb">5</div>
<div class="n" style="left:158px;top:218.51px;color:#ea76cb">5</div>
<div class="n" style="left:190px;top:218.51px;color:#55586f;-webkit-text-stroke-width:0.7px">7</div>
<div class="n" style="left:222px;top:218.51px;color:#6c6f85">1</div>
<div class="n" style="left:230px;top:218.51px;color:#6c6f85">5</div>
<div class="n" style="left:254px;top:218.51px;color:#a614ef">5</div>
<div class="n" style="left:262px;top:218.51px;color:#a614ef">0</div>
<div class="n" style="left:286px;top:218.51px;color:#a614ef">5</div>
<div class="n" style="left:294px;top:218.51px;color:#a614ef">0</div>
<svg class="g" style="left:318px;top:220px" width="8" height="14" viewBox="0 -12 8 14"><path d="M0.9 -9.45 H6.3 L3.4 -5.9 H3.8 C5.6 -5.9 6.6 -4.7 6.6 -3.2 C6.6 -1.6 5.4 -0.75 3.7 -0.75 C2.4 -0.75 1.4 -1.3 0.9 -2.3" stroke="#10a8cc"/></svg>
<div class="n" style="left:326px;top:218.51px;color:#10a8cc">8</div>
<div class="n" style="left:350px;top:218.51px;color:#a614ef">5</div>
<div class="n" style="left:358px;top:218.51px;color:#a614ef">0</div>
<div class="n" style="left:382px;top:218.51px;color:#a614ef">5</div>
<div class="n" style="left:390px;top:218.51px;color:#a614ef">0</div>
<div class="n" style="left:414px;top:218.51px;color:#a614ef">5</div>
<div class="n" style="left:422px;top:218.51px;color:#a614ef">0</div>
<div class="n" style="left:446px;top:218.51px;color:#a614ef">5</div>
<div class="n" style="left:454px;top:218.51px;color:#a614ef">0</div>
<div class="n" style="left:478px;top:218.51px;color:#a614ef">5</div>
<div class="n" style="left:486px;top:218.51px;color:#a614ef">0</div>
<div class="n" style="left:510px;top:218.51px;color:#a614ef">5</div>
<div class="n" style="left:518px;top:218.51px;color:#a614ef">0</div>
<div class="n" style="left:542px;top:218.51px;color:#a614ef">5</div>
<div class="n" style="left:550px;top:218.51px;color:#a614ef">0</div>
<div class="n" style="left:574px;top:218.51px;color:#a614ef">5</div>
<div class="n" style="left:582px;top:218.51px;color:#a614ef">0</div>
<div class="n" style="left:606px;top:218.51px;color:#a614ef">5</div>
<div class="n" style="left:614px;top:218.51px;color:#a614ef">0</div>
<div class="n" style="left:638px;top:218.51px;color:#ea76cb">5</div>
<div class="n" style="left:30px;top:237.51px;color:#d20f39">1</div>
<div class="n" style="left:62px;top:237.51px;color:#ea76cb">5</div>
<div class="n" style="left:94px;top:237.51px;color:#55586f;-webkit-text-stroke-width:0.7px">7</div>
<svg class="g" style="left:126px;top:239px" width="8" height="14" viewBox="0 -12 8 14"><path d="M5.1 -9.4 L1.8 -3.9 M1.5 -3.0 A2.7 2.4 0 1 0 6.9 -3.0 A2.7 2.4 0 1 0 1.5 -3.0" stroke="#168c92"/></svg>
<div class="n" style="left:158px;top:237.51px;color:#a3a7b6">8</div>
<svg class="g" style="left:190px;top:239px" width="8" height="14" viewBox="0 -12 8 14"><path d="M5.4 -9.4 L1.6 -3.0 H6.9 M6.2 -6.2 V0" stroke="#10d0f0"/></svg>
<div class="n" style="left:198px;top:237.51px;color:#10d0f0">5</div>
<div class="n" style="left:222px;top:237.51px;color:#a614ef">5</div>
<div class="n" style="left:230px;top:237.51px;color:#a614ef">0</div>
<div class="n" style="left:254px;top:237.51px;color:#a614ef">5</div>
<div class="n" style="left:262px;top:237.51px;color:#a614ef">0</div>
<div class="n" style="left:286px;top:237.51px;color:#a614ef">5</div>
<div class="n" style="left:294px;top:237.51px;color:#a614ef">0</div>
<div class="n" style="left:318px;top:237.51px;color:#a614ef">5</div>
<div class="n" style="left:326px;top:237.51px;color:#a614ef">0</div>
<div class="n" style="left:350px;top:237.51px;color:#a614ef">5</div>
<div class="n" style="left:358px;top:237.51px;color:#a614ef">0</div>
<div class="n" style="left:382px;top:237.51px;color:#a614ef">5</div>
<div class="n" style="left:390px;top:237.51px;color:#a614ef">0</div>
<div class="n" style="left:414px;top:237.51px;color:#a614ef">5</div>
<div class="n" style="left:422px;top:237.51px;color:#a614ef">0</div>
<div class="n" style="left:446px;top:237.51px;color:#a614ef">5</div>
<div class="n" style="left:454px;top:237.51px;color:#a614ef">0</div>
<div class="n" style="left:478px;top:237.51px;color:#a614ef">5</div>
<div class="n" style="left:486px;top:237.51px;color:#a614ef">0</div>
<div class="n" style="left:510px;top:237.51px;color:#a614ef">5</div>
<div class="n" style="left:518px;top:237.51px;color:#a614ef">0</div>
<div class="n" style="left:542px;top:237.51px;color:#a614ef">5</div>
<div class="n" style="left:550px;top:237.51px;color:#a614ef">0</div>
<div class="n" style="left:574px;top:237.51px;color:#a614ef">5</div>
<div class="n" style="left:582px;top:237.51px;color:#a614ef">0</div>
<svg class="g" style="left:606px;top:239px" width="8" height="14" viewBox="0 -12 8 14"><path d="M1.5 -7.0 A2.7 2.4 0 1 0 6.9 -7.0 A2.7 2.4 0 1 0 1.5 -7.0 M6.7 -6.2 L3.0 -0.6" stroke="#d20f39"/></svg>
<div class="n" style="left:638px;top:237.51px;color:#ea76cb">5</div>
<div class="n" style="left:30px;top:256.51px;color:#d20f39">1</div>
<div class="n" style="left:62px;top:256.51px;color:#ea76cb">5</div>
<div class="n" style="left:94px;top:256.51px;color:#55586f;-webkit-text-stroke-width:0.7px">7</div>
<svg class="g" style="left:126px;top:258px" width="8" height="14" viewBox="0 -12 8 14"><path d="M5.1 -9.4 L1.8 -3.9 M1.5 -3.0 A2.7 2.4 0 1 0 6.9 -3.0 A2.7 2.4 0 1 0 1.5 -3.0" stroke="#168c92"/></svg>
<div class="n" style="left:158px;top:256.51px;color:#a3a7b6">8</div>
<svg class="g" style="left:190px;top:258px" width="8" height="14" viewBox="0 -12 8 14"><path d="M5.4 -9.4 L1.6 -3.0 H6.9 M6.2 -6.2 V0" stroke="#10d0f0"/></svg>
<div class="n" style="left:198px;top:256.51px;color:#10d0f0">5</div>
<div class="n" style="left:222px;top:256.51px;color:#a614ef">5</div>
<div class="n" style="left:230px;top:256.51px;color:#a614ef">0</div>
<div class="n" style="left:254px;top:256.51px;color:#a614ef">5</div>
<div class="n" style="left:262px;top:256.51px;color:#a614ef">0</div>
<div class="n" style="left:286px;top:256.51px;color:#a614ef">5</div>
<div class="n" style="left:294px;top:256.51px;color:#a614ef">0</div>
<div class="n" style="left:318px;top:256.51px;color:#a614ef">5</div>
<div class="n" style="left:326px;top:256.51px;color:#a614ef">0</div>
<div class="n" style="left:350px;top:256.51px;color:#a614ef">5</div>
<div class="n" style="left:358px;top:256.51px;color:#a614ef">0</div>
<div class="n" style="left:382px;top:256.51px;color:#a614ef">5</div>
<div class="n" style="left:390px;top:256.51px;color:#a614ef">0</div>
<div class="n" style="left:414px;top:256.51px;color:#a614ef">5</div>
<div class="n" style="left:422px;top:256.51px;color:#a614ef">0</div>
<div class="n" style="left:446px;top:256.51px;color:#a614ef">5</div>
<div class="n" style="left:454px;top:256.51px;color:#a614ef">0</div>
<div class="n" style="left:478px;top:256.51px;color:#a614ef">5</div>
<div class="n" style="left:486px;top:256.51px;color:#a614ef">0</div>
<div class="n" style="left:510px;top:256.51px;color:#a614ef">5</div>
<div class="n" style="left:518px;top:256.51px;color:#a614ef">0</div>
<div class="n" style="left:542px;top:256.51px;color:#a614ef">5</div>
<div class="n" style="left:550px;top:256.51px;color:#a614ef">0</div>
<div class="n" style="left:574px;top:256.51px;color:#a614ef">5</div>
<div class="n" style="left:582px;top:256.51px;color:#a614ef">0</div>
<svg class="g" style="left:606px;top:258px" width="8" height="14" viewBox="0 -12 8 14"><path d="M1.5 -7.0 A2.7 2.4 0 1 0 6.9 -7.0 A2.7 2.4 0 1 0 1.5 -7.0 M6.7 -6.2 L3.0 -0.6" stroke="#d20f39"/></svg>
<div class="n" style="left:638px;top:256.51px;color:#ea76cb">5</div>
<div class="n" style="left:30px;top:275.51px;color:#d20f39">1</div>
<svg class="g" style="left:62px;top:277px" width="8" height="14" viewBox="0 -12 8 14"><path d="M5.4 -9.4 L1.6 -3.0 H6.9 M6.2 -6.2 V0" stroke="#1e66f5"/></svg>
<svg class="g" style="left:94px;top:277px" width="8" height="14" viewBox="0 -12 8 14"><path d="M5.4 -9.4 L1.6 -3.0 H6.9 M6.2 -6.2 V0" stroke="#1e66f5"/></svg>
<div class="n" style="left:126px;top:275.51px;color:#ea76cb">5</div>
<div class="n" style="left:158px;top:275.51px;color:#ea76cb">5</div>
<div class="n" style="left:190px;top:275.51px;color:#55586f;-webkit-text-stroke-width:0.7px">7</div>
<div class="n" style="left:222px;top:275.51px;color:#6c6f85">1</div>
<div class="n" style="left:230px;top:275.51px;color:#6c6f85">5</div>
<div class="n" style="left:254px;top:275.51px;color:#a614ef">5</div>
<div class="n" style="left:262px;top:275.51px;color:#a614ef">0</div>
<div class="n" style="left:286px;top:275.51px;color:#a614ef">5</div>
<div class="n" style="left:294px;top:275.51px;color:#a614ef">0</div>
<svg class="g" style="left:318px;top:277px" width="8" height="14" viewBox="0 -12 8 14"><path d="M0.9 -9.45 H6.3 L3.4 -5.9 H3.8 C5.6 -5.9 6.6 -4.7 6.6 -3.2 C6.6 -1.6 5.4 -0.75 3.7 -0.75 C2.4 -0.75 1.4 -1.3 0.9 -2.3" stroke="#10a8cc"/></svg>
<div class="n" style="left:326px;top:275.51px;color:#10a8cc">8</div>
<div class="n" style="left:350px;top:275.51px;color:#a614ef">5</div>
<div class="n" style="left:358px;top:275.51px;color:#a614ef">0</div>
<div class="n" style="left:382px;top:275.51px;color:#a614ef">5</div>
<div class="n" style="left:390px;top:275.51px;color:#a614ef">0</div>
<div class="n" style="left:414px;top:275.51px;color:#a614ef">5</div>
<div class="n" style="left:422px;top:275.51px;color:#a614ef">0</div>
<div class="n" style="left:446px;top:275.51px;color:#a614ef">5</div>
<div class="n" style="left:454px;top:275.51px;color:#a614ef">0</div>
<div class="n" style="left:478px;top:275.51px;color:#a614ef">5</div>
<div class="n" style="left:486px;top:275.51px;color:#a614ef">0</div>
<div class="n" style="left:510px;top:275.51px;color:#a614ef">5</div>
<div class="n" style="left:518px;top:275.51px;color:#a614ef">0</div>
<div class="n" style="left:542px;top:275.51px;color:#a614ef">5</div>
<div class="n" style="left:550px;top:275.51px;color:#a614ef">0</div>
<div class="n" style="left:574px;top:275.51px;color:#a614ef">5</div>
<div class="n" style="left:582px;top:275.51px;color:#a614ef">0</div>
<div class="n" style="left:606px;top:275.51px;color:#a614ef">5</div>
<div class="n" style="left:614px;top:275.51px;color:#a614ef">0</div>
<div class="n" style="left:638px;top:275.51px;color:#ea76cb">5</div>
<div class="n" style="left:30px;top:294.51px;color:#d20f39">1</div>
<svg class="g" style="left:62px;top:296px" width="8" height="14" viewBox="0 -12 8 14"><path d="M0.9 -9.45 H6.3 L3.4 -5.9 H3.8 C5.6 -5.9 6.6 -4.7 6.6 -3.2 C6.6 -1.6 5.4 -0.75 3.7 -0.75 C2.4 -0.75 1.4 -1.3 0.9 -2.3" stroke="#dc8a1a"/></svg>
<svg class="g" style="left:94px;top:296px" width="8" height="14" viewBox="0 -12 8 14"><path d="M5.4 -9.4 L1.6 -3.0 H6.9 M6.2 -6.2 V0" stroke="#1e66f5"/></svg>
<svg class="g" style="left:126px;top:296px" width="8" height="14" viewBox="0 -12 8 14"><path d="M5.4 -9.4 L1.6 -3.0 H6.9 M6.2 -6.2 V0" stroke="#1e66f5"/></svg>
<div class="n" style="left:158px;top:294.51px;color:#ea76cb">5</div>
<svg class="g" style="left:190px;top:296px" width="8" height="14" viewBox="0 -12 8 14"><path d="M5.1 -9.4 L1.8 -3.9 M1.5 -3.0 A2.7 2.4 0 1 0 6.9 -3.0 A2.7 2.4 0 1 0 1.5 -3.0" stroke="#168c92"/></svg>
<div class="n" style="left:222px;top:294.51px;color:#1e66f5">1</div>
<div class="n" style="left:230px;top:294.51px;color:#1e66f5">2</div>
<div class="n" style="left:254px;top:294.51px;color:#40a02b">1</div>
<div class="n" style="left:262px;top:294.51px;color:#40a02b">0</div>
<div class="n" style="left:286px;top:294.51px;color:#40a02b">1</div>
<div class="n" style="left:294px;top:294.51px;color:#40a02b">0</div>
<svg class="g" style="left:318px;top:296px" width="8" height="14" viewBox="0 -12 8 14"><path d="M1.5 -7.0 A2.7 2.4 0 1 0 6.9 -7.0 A2.7 2.4 0 1 0 1.5 -7.0 M6.7 -6.2 L3.0 -0.6" stroke="#d20f39"/></svg>
<div class="n" style="left:350px;top:294.51px;color:#a614ef">5</div>
<div class="n" style="left:358px;top:294.51px;color:#a614ef">0</div>
<div class="n" style="left:382px;top:294.51px;color:#a614ef">5</div>
<div class="n" style="left:390px;top:294.51px;color:#a614ef">0</div>
<div class="n" style="left:414px;top:294.51px;color:#a614ef">5</div>
<div class="n" style="left:422px;top:294.51px;color:#a614ef">0</div>
<div class="n" style="left:446px;top:294.51px;color:#a614ef">5</div>
<div class="n" style="left:454px;top:294.51px;color:#a614ef">0</div>
<div class="n" style="left:478px;top:294.51px;color:#a614ef">5</div>
<div class="n" style="left:486px;top:294.51px;color:#a614ef">0</div>
<div class="n" style="left:510px;top:294.51px;color:#a614ef">5</div>
<div class="n" style="left:518px;top:294.51px;color:#a614ef">0</div>
<div class="n" style="left:542px;top:294.51px;color:#a614ef">5</div>
<div class="n" style="left:550px;top:294.51px;color:#a614ef">0</div>
<div class="n" style="left:574px;top:294.51px;color:#a614ef">5</div>
<div class="n" style="left:582px;top:294.51px;color:#a614ef">0</div>
<div class="n" style="left:606px;top:294.51px;color:#a614ef">5</div>
<div class="n" style="left:614px;top:294.51px;color:#a614ef">0</div>
<svg class="g" style="left:638px;top:296px" width="8" height="14" viewBox="0 -12 8 14"><path d="M5.1 -9.4 L1.8 -3.9 M1.5 -3.0 A2.7 2.4 0 1 0 6.9 -3.0 A2.7 2.4 0 1 0 1.5 -3.0" stroke="#168c92"/></svg>
<div class="n" style="left:30px;top:313.51px;color:#d20f39">1</div>
<svg class="g" style="left:62px;top:315px" width="8" height="14" viewBox="0 -12 8 14"><path d="M0.9 -9.45 H6.3 L3.4 -5.9 H3.8 C5.6 -5.9 6.6 -4.7 6.6 -3.2 C6.6 -1.6 5.4 -0.75 3.7 -0.75 C2.4 -0.75 1.4 -1.3 0.9 -2.3" stroke="#dc8a1a"/></svg>
<svg class="g" style="left:94px;top:315px" width="8" height="14" viewBox="0 -12 8 14"><path d="M0.9 -9.45 H6.3 L3.4 -5.9 H3.8 C5.6 -5.9 6.6 -4.7 6.6 -3.2 C6.6 -1.6 5.4 -0.75 3.7 -0.75 C2.4 -0.75 1.4 -1.3 0.9 -2.3" stroke="#dc8a1a"/></svg>
<svg class="g" style="left:126px;top:315px" width="8" height="14" viewBox="0 -12 8 14"><path d="M0.9 -9.45 H6.3 L3.4 -5.9 H3.8 C5.6 -5.9 6.6 -4.7 6.6 -3.2 C6.6 -1.6 5.4 -0.75 3.7 -0.75 C2.4 -0.75 1.4 -1.3 0.9 -2.3" stroke="#dc8a1a"/></svg>
<svg class="g" style="left:158px;top:315px" width="8" height="14" viewBox="0 -12 8 14"><path d="M0.9 -9.45 H6.3 L3.4 -5.9 H3.8 C5.6 -5.9 6.6 -4.7 6.6 -3.2 C6.6 -1.6 5.4 -0.75 3.7 -0.75 C2.4 -0.75 1.4 -1.3 0.9 -2.3" stroke="#dc8a1a"/></svg>
<svg class="g" style="left:190px;top:315px" width="8" height="14" viewBox="0 -12 8 14"><path d="M5.4 -9.4 L1.6 -3.0 H6.9 M6.2 -6.2 V0" stroke="#1e66f5"/></svg>
<svg class="g" style="left:222px;top:315px" width="8" height="14" viewBox="0 -12 8 14"><path d="M5.1 -9.4 L1.8 -3.9 M1.5 -3.0 A2.7 2.4 0 1 0 6.9 -3.0 A2.7 2.4 0 1 0 1.5 -3.0" stroke="#168c92"/></svg>
<div class="n" style="left:254px;top:313.51px;color:#ea76cb">5</div>
<div class="n" style="left:286px;top:313.51px;color:#ea76cb">5</div>
<svg class="g" style="left:318px;top:315px" width="8" height="14" viewBox="0 -12 8 14"><path d="M5.1 -9.4 L1.8 -3.9 M1.5 -3.0 A2.7 2.4 0 1 0 6.9 -3.0 A2.7 2.4 0 1 0 1.5 -3.0" stroke="#168c92"/></svg>
<div class="n" style="left:350px;top:313.51px;color:#005aaa">2</div>
<div class="n" style="left:358px;top:313.51px;color:#005aaa">5</div>
<div class="n" style="left:382px;top:313.51px;color:#a614ef">5</div>
<div class="n" style="left:390px;top:313.51px;color:#a614ef">0</div>
<div class="n" style="left:414px;top:313.51px;color:#a614ef">5</div>
<div class="n" style="left:422px;top:313.51px;color:#a614ef">0</div>
<div class="n" style="left:446px;top:313.51px;color:#a614ef">5</div>
<div class="n" style="left:454px;top:313.51px;color:#a614ef">0</div>
<div class="n" style="left:478px;top:313.51px;color:#a614ef">5</div>
<div class="n" style="left:486px;top:313.51px;color:#a614ef">0</div>
<div class="n" style="left:510px;top:313.51px;color:#a614ef">5</div>
<div class="n" style="left:518px;top:313.51px;color:#a614ef">0</div>
<div class="n" style="left:542px;top:313.51px;color:#a614ef">5</div>
<div class="n" style="left:550px;top:313.51px;color:#a614ef">0</div>
<div class="n" style="left:574px;top:313.51px;color:#a614ef">5</div>
<div class="n" style="left:582px;top:313.51px;color:#a614ef">0</div>
<svg class="g" style="left:606px;top:315px" width="8" height="14" viewBox="0 -12 8 14"><path d="M1.5 -7.0 A2.7 2.4 0 1 0 6.9 -7.0 A2.7 2.4 0 1 0 1.5 -7.0 M6.7 -6.2 L3.0 -0.6" stroke="#d20f39"/></svg>
<div class="n" style="left:638px;top:313.51px;color:#ea76cb">5</div>
<div class="n" style="left:30px;top:332.51px;color:#d20f39">1</div>
<div class="n" style="left:62px;top:332.51px;color:#40a02b">2</div>
<svg class="g" style="left:94px;top:334px" width="8" height="14" viewBox="0 -12 8 14"><path d="M0.9 -9.45 H6.3 L3.4 -5.9 H3.8 C5.6 -5.9 6.6 -4.7 6.6 -3.2 C6.6 -1.6 5.4 -0.75 3.7 -0.75 C2.4 -0.75 1.4 -1.3 0.9 -2.3" stroke="#dc8a1a"/></svg>
<svg class="g" style="left:126px;top:334px" width="8" height="14" viewBox="0 -12 8 14"><path d="M0.9 -9.45 H6.3 L3.4 -5.9 H3.8 C5.6 -5.9 6.6 -4.7 6.6 -3.2 C6.6 -1.6 5.4 -0.75 3.7 -0.75 C2.4 -0.75 1.4 -1.3 0.9 -2.3" stroke="#dc8a1a"/></svg>
<svg class="g" style="left:158px;top:334px" width="8" height="14" viewBox="0 -12 8 14"><path d="M0.9 -9.45 H6.3 L3.4 -5.9 H3.8 C5.6 -5.9 6.6 -4.7 6.6 -3.2 C6.6 -1.6 5.4 -0.75 3.7 -0.75 C2.4 -0.75 1.4 -1.3 0.9 -2.3" stroke="#dc8a1a"/></svg>
<svg class="g" style="left:190px;top:334px" width="8" height="14" viewBox="0 -12 8 14"><path d="M0.9 -9.45 H6.3 L3.4 -5.9 H3.8 C5.6 -5.9 6.6 -4.7 6.6 -3.2 C6.6 -1.6 5.4 -0.75 3.7 -0.75 C2.4 -0.75 1.4 -1.3 0.9 -2.3" stroke="#dc8a1a"/></svg>
<svg class="g" style="left:222px;top:334px" width="8" height="14" viewBox="0 -12 8 14"><path d="M0.9 -9.45 H6.3 L3.4 -5.9 H3.8 C5.6 -5.9 6.6 -4.7 6.6 -3.2 C6.6 -1.6 5.4 -0.75 3.7 -0.75 C2.4 -0.75 1.4 -1.3 0.9 -2.3" stroke="#dc8a1a"/></svg>
<svg class="g" style="left:254px;top:334px" width="8" height="14" viewBox="0 -12 8 14"><path d="M5.4 -9.4 L1.6 -3.0 H6.9 M6.2 -6.2 V0" stroke="#1e66f5"/></svg>
<div class="n" style="left:286px;top:332.51px;color:#ea76cb">5</div>
<div class="n" style="left:318px;top:332.51px;color:#ea76cb">5</div>
<svg class="g" style="left:350px;top:334px" width="8" height="14" viewBox="0 -12 8 14"><path d="M5.1 -9.4 L1.8 -3.9 M1.5 -3.0 A2.7 2.4 0 1 0 6.9 -3.0 A2.7 2.4 0 1 0 1.5 -3.0" stroke="#168c92"/></svg>
<div class="n" style="left:382px;top:332.51px;color:#005aaa">2</div>
<div class="n" style="left:390px;top:332.51px;color:#005aaa">5</div>
<div class="n" style="left:414px;top:332.51px;color:#a614ef">5</div>
<div class="n" style="left:422px;top:332.51px;color:#a614ef">0</div>
<div class="n" style="left:446px;top:332.51px;color:#a614ef">5</div>
<div class="n" style="left:454px;top:332.51px;color:#a614ef">0</div>
<div class="n" style="left:478px;top:332.51px;color:#a614ef">5</div>
<div class="n" style="left:486px;top:332.51px;color:#a614ef">0</div>
<div class="n" style="left:510px;top:332.51px;color:#a614ef">5</div>
<div class="n" style="left:518px;top:332.51px;color:#a614ef">0</div>
<div class="n" style="left:542px;top:332.51px;color:#a614ef">5</div>
<div class="n" style="left:550px;top:332.51px;color:#a614ef">0</div>
<div class="n" style="left:574px;top:332.51px;color:#ea76cb">1</div>
<svg class="g" style="left:582px;top:334px" width="8" height="14" viewBox="0 -12 8 14"><path d="M0.9 -9.45 H6.3 L3.4 -5.9 H3.8 C5.6 -5.9 6.6 -4.7 6.6 -3.2 C6.6 -1.6 5.4 -0.75 3.7 -0.75 C2.4 -0.75 1.4 -1.3 0.9 -2.3" stroke="#ea76cb"/></svg>
<div class="n" style="left:606px;top:332.51px;color:#138a1e">2</div>
<div class="n" style="left:614px;top:332.51px;color:#138a1e">8</div>
<svg class="g" style="left:638px;top:334px" width="8" height="14" viewBox="0 -12 8 14"><path d="M5.4 -9.4 L1.6 -3.0 H6.9 M6.2 -6.2 V0" stroke="#1e66f5"/></svg>
<div class="n" style="left:30px;top:351.51px;color:#d20f39">1</div>
<div class="n" style="left:62px;top:351.51px;color:#d20f39">1</div>
<svg class="g" style="left:94px;top:353px" width="8" height="14" viewBox="0 -12 8 14"><path d="M0.9 -9.45 H6.3 L3.4 -5.9 H3.8 C5.6 -5.9 6.6 -4.7 6.6 -3.2 C6.6 -1.6 5.4 -0.75 3.7 -0.75 C2.4 -0.75 1.4 -1.3 0.9 -2.3" stroke="#dc8a1a"/></svg>
<svg class="g" style="left:126px;top:353px" width="8" height="14" viewBox="0 -12 8 14"><path d="M0.9 -9.45 H6.3 L3.4 -5.9 H3.8 C5.6 -5.9 6.6 -4.7 6.6 -3.2 C6.6 -1.6 5.4 -0.75 3.7 -0.75 C2.4 -0.75 1.4 -1.3 0.9 -2.3" stroke="#dc8a1a"/></svg>
<svg class="g" style="left:158px;top:353px" width="8" height="14" viewBox="0 -12 8 14"><path d="M0.9 -9.45 H6.3 L3.4 -5.9 H3.8 C5.6 -5.9 6.6 -4.7 6.6 -3.2 C6.6 -1.6 5.4 -0.75 3.7 -0.75 C2.4 -0.75 1.4 -1.3 0.9 -2.3" stroke="#dc8a1a"/></svg>
<svg class="g" style="left:190px;top:353px" width="8" height="14" viewBox="0 -12 8 14"><path d="M0.9 -9.45 H6.3 L3.4 -5.9 H3.8 C5.6 -5.9 6.6 -4.7 6.6 -3.2 C6.6 -1.6 5.4 -0.75 3.7 -0.75 C2.4 -0.75 1.4 -1.3 0.9 -2.3" stroke="#dc8a1a"/></svg>
<svg class="g" style="left:222px;top:353px" width="8" height="14" viewBox="0 -12 8 14"><path d="M0.9 -9.45 H6.3 L3.4 -5.9 H3.8 C5.6 -5.9 6.6 -4.7 6.6 -3.2 C6.6 -1.6 5.4 -0.75 3.7 -0.75 C2.4 -0.75 1.4 -1.3 0.9 -2.3" stroke="#dc8a1a"/></svg>
<svg class="g" style="left:254px;top:353px" width="8" height="14" viewBox="0 -12 8 14"><path d="M0.9 -9.45 H6.3 L3.4 -5.9 H3.8 C5.6 -5.9 6.6 -4.7 6.6 -3.2 C6.6 -1.6 5.4 -0.75 3.7 -0.75 C2.4 -0.75 1.4 -1.3 0.9 -2.3" stroke="#dc8a1a"/></svg>
<svg class="g" style="left:286px;top:353px" width="8" height="14" viewBox="0 -12 8 14"><path d="M5.4 -9.4 L1.6 -3.0 H6.9 M6.2 -6.2 V0" stroke="#1e66f5"/></svg>
<svg class="g" style="left:318px;top:353px" width="8" height="14" viewBox="0 -12 8 14"><path d="M5.4 -9.4 L1.6 -3.0 H6.9 M6.2 -6.2 V0" stroke="#1e66f5"/></svg>
<div class="n" style="left:350px;top:351.51px;color:#ea76cb">5</div>
<div class="n" style="left:382px;top:351.51px;color:#55586f;-webkit-text-stroke-width:0.7px">7</div>
<div class="n" style="left:414px;top:351.51px;color:#55586f;-webkit-text-stroke-width:0.7px">7</div>
<div class="n" style="left:446px;top:351.51px;color:#40a02b">1</div>
<div class="n" style="left:454px;top:351.51px;color:#40a02b">0</div>
<div class="n" style="left:478px;top:351.51px;color:#a614ef">5</div>
<div class="n" style="left:486px;top:351.51px;color:#a614ef">0</div>
<div class="n" style="left:510px;top:351.51px;color:#a614ef">5</div>
<div class="n" style="left:518px;top:351.51px;color:#a614ef">0</div>
<div class="n" style="left:542px;top:351.51px;color:#a3a7b6">8</div>
<svg class="g" style="left:574px;top:353px" width="8" height="14" viewBox="0 -12 8 14"><path d="M5.1 -9.4 L1.8 -3.9 M1.5 -3.0 A2.7 2.4 0 1 0 6.9 -3.0 A2.7 2.4 0 1 0 1.5 -3.0" stroke="#168c92"/></svg>
<div class="n" style="left:606px;top:351.51px;color:#ea76cb">5</div>
<svg class="g" style="left:638px;top:353px" width="8" height="14" viewBox="0 -12 8 14"><path d="M0.9 -9.45 H6.3 L3.4 -5.9 H3.8 C5.6 -5.9 6.6 -4.7 6.6 -3.2 C6.6 -1.6 5.4 -0.75 3.7 -0.75 C2.4 -0.75 1.4 -1.3 0.9 -2.3" stroke="#dc8a1a"/></svg>
<div class="n" style="left:30px;top:370.51px;color:#d20f39">1</div>
<div class="n" style="left:62px;top:370.51px;color:#d20f39">1</div>
<div class="n" style="left:94px;top:370.51px;color:#40a02b">2</div>
<svg class="g" style="left:126px;top:372px" width="8" height="14" viewBox="0 -12 8 14"><path d="M0.9 -9.45 H6.3 L3.4 -5.9 H3.8 C5.6 -5.9 6.6 -4.7 6.6 -3.2 C6.6 -1.6 5.4 -0.75 3.7 -0.75 C2.4 -0.75 1.4 -1.3 0.9 -2.3" stroke="#dc8a1a"/></svg>
<svg class="g" style="left:158px;top:372px" width="8" height="14" viewBox="0 -12 8 14"><path d="M0.9 -9.45 H6.3 L3.4 -5.9 H3.8 C5.6 -5.9 6.6 -4.7 6.6 -3.2 C6.6 -1.6 5.4 -0.75 3.7 -0.75 C2.4 -0.75 1.4 -1.3 0.9 -2.3" stroke="#dc8a1a"/></svg>
<svg class="g" style="left:190px;top:372px" width="8" height="14" viewBox="0 -12 8 14"><path d="M0.9 -9.45 H6.3 L3.4 -5.9 H3.8 C5.6 -5.9 6.6 -4.7 6.6 -3.2 C6.6 -1.6 5.4 -0.75 3.7 -0.75 C2.4 -0.75 1.4 -1.3 0.9 -2.3" stroke="#dc8a1a"/></svg>
<svg class="g" style="left:222px;top:372px" width="8" height="14" viewBox="0 -12 8 14"><path d="M0.9 -9.45 H6.3 L3.4 -5.9 H3.8 C5.6 -5.9 6.6 -4.7 6.6 -3.2 C6.6 -1.6 5.4 -0.75 3.7 -0.75 C2.4 -0.75 1.4 -1.3 0.9 -2.3" stroke="#dc8a1a"/></svg>
<svg class="g" style="left:254px;top:372px" width="8" height="14" viewBox="0 -12 8 14"><path d="M0.9 -9.45 H6.3 L3.4 -5.9 H3.8 C5.6 -5.9 6.6 -4.7 6.6 -3.2 C6.6 -1.6 5.4 -0.75 3.7 -0.75 C2.4 -0.75 1.4 -1.3 0.9 -2.3" stroke="#dc8a1a"/></svg>
<svg class="g" style="left:286px;top:372px" width="8" height="14" viewBox="0 -12 8 14"><path d="M0.9 -9.45 H6.3 L3.4 -5.9 H3.8 C5.6 -5.9 6.6 -4.7 6.6 -3.2 C6.6 -1.6 5.4 -0.75 3.7 -0.75 C2.4 -0.75 1.4 -1.3 0.9 -2.3" stroke="#dc8a1a"/></svg>
<svg class="g" style="left:318px;top:372px" width="8" height="14" viewBox="0 -12 8 14"><path d="M5.4 -9.4 L1.6 -3.0 H6.9 M6.2 -6.2 V0" stroke="#1e66f5"/></svg>
<svg class="g" style="left:350px;top:372px" width="8" height="14" viewBox="0 -12 8 14"><path d="M5.4 -9.4 L1.6 -3.0 H6.9 M6.2 -6.2 V0" stroke="#1e66f5"/></svg>
<svg class="g" style="left:382px;top:372px" width="8" height="14" viewBox="0 -12 8 14"><path d="M5.4 -9.4 L1.6 -3.0 H6.9 M6.2 -6.2 V0" stroke="#1e66f5"/></svg>
<div class="n" style="left:414px;top:370.51px;color:#ea76cb">5</div>
<div class="n" style="left:446px;top:370.51px;color:#005fd7">2</div>
<svg class="g" style="left:454px;top:372px" width="8" height="14" viewBox="0 -12 8 14"><path d="M5.1 -9.4 L1.8 -3.9 M1.5 -3.0 A2.7 2.4 0 1 0 6.9 -3.0 A2.7 2.4 0 1 0 1.5 -3.0" stroke="#005fd7"/></svg>
<div class="n" style="left:478px;top:370.51px;color:#0000a8">1</div>
<svg class="g" style="left:486px;top:372px" width="8" height="14" viewBox="0 -12 8 14"><path d="M1.5 -7.0 A2.7 2.4 0 1 0 6.9 -7.0 A2.7 2.4 0 1 0 1.5 -7.0 M6.7 -6.2 L3.0 -0.6" stroke="#0000a8"/></svg>
<div class="n" style="left:510px;top:370.51px;color:#df8e1d">1</div>
<div class="n" style="left:518px;top:370.51px;color:#df8e1d">1</div>
<div class="n" style="left:542px;top:370.51px;color:#ea76cb">5</div>
<svg class="g" style="left:574px;top:372px" width="8" height="14" viewBox="0 -12 8 14"><path d="M5.4 -9.4 L1.6 -3.0 H6.9 M6.2 -6.2 V0" stroke="#1e66f5"/></svg>
<svg class="g" style="left:606px;top:372px" width="8" height="14" viewBox="0 -12 8 14"><path d="M5.4 -9.4 L1.6 -3.0 H6.9 M6.2 -6.2 V0" stroke="#1e66f5"/></svg>
<svg class="g" style="left:638px;top:372px" width="8" height="14" viewBox="0 -12 8 14"><path d="M0.9 -9.45 H6.3 L3.4 -5.9 H3.8 C5.6 -5.9 6.6 -4.7 6.6 -3.2 C6.6 -1.6 5.4 -0.75 3.7 -0.75 C2.4 -0.75 1.4 -1.3 0.9 -2.3" stroke="#dc8a1a"/></svg>
<div class="n" style="left:30px;top:389.51px;color:#d20f39">1</div>
<div class="n" style="left:62px;top:389.51px;color:#d20f39">1</div>
<div class="n" style="left:94px;top:389.51px;color:#40a02b">2</div>
<div class="n" style="left:126px;top:389.51px;color:#40a02b">2</div>
<svg class="g" style="left:158px;top:391px" width="8" height="14" viewBox="0 -12 8 14"><path d="M0.9 -9.45 H6.3 L3.4 -5.9 H3.8 C5.6 -5.9 6.6 -4.7 6.6 -3.2 C6.6 -1.6 5.4 -0.75 3.7 -0.75 C2.4 -0.75 1.4 -1.3 0.9 -2.3" stroke="#dc8a1a"/></svg>
<svg class="g" style="left:190px;top:391px" width="8" height="14" viewBox="0 -12 8 14"><path d="M0.9 -9.45 H6.3 L3.4 -5.9 H3.8 C5.6 -5.9 6.6 -4.7 6.6 -3.2 C6.6 -1.6 5.4 -0.75 3.7 -0.75 C2.4 -0.75 1.4 -1.3 0.9 -2.3" stroke="#dc8a1a"/></svg>
<svg class="g" style="left:222px;top:391px" width="8" height="14" viewBox="0 -12 8 14"><path d="M0.9 -9.45 H6.3 L3.4 -5.9 H3.8 C5.6 -5.9 6.6 -4.7 6.6 -3.2 C6.6 -1.6 5.4 -0.75 3.7 -0.75 C2.4 -0.75 1.4 -1.3 0.9 -2.3" stroke="#dc8a1a"/></svg>
<svg class="g" style="left:254px;top:391px" width="8" height="14" viewBox="0 -12 8 14"><path d="M0.9 -9.45 H6.3 L3.4 -5.9 H3.8 C5.6 -5.9 6.6 -4.7 6.6 -3.2 C6.6 -1.6 5.4 -0.75 3.7 -0.75 C2.4 -0.75 1.4 -1.3 0.9 -2.3" stroke="#dc8a1a"/></svg>
<svg class="g" style="left:286px;top:391px" width="8" height="14" viewBox="0 -12 8 14"><path d="M0.9 -9.45 H6.3 L3.4 -5.9 H3.8 C5.6 -5.9 6.6 -4.7 6.6 -3.2 C6.6 -1.6 5.4 -0.75 3.7 -0.75 C2.4 -0.75 1.4 -1.3 0.9 -2.3" stroke="#dc8a1a"/></svg>
<svg class="g" style="left:318px;top:391px" width="8" height="14" viewBox="0 -12 8 14"><path d="M0.9 -9.45 H6.3 L3.4 -5.9 H3.8 C5.6 -5.9 6.6 -4.7 6.6 -3.2 C6.6 -1.6 5.4 -0.75 3.7 -0.75 C2.4 -0.75 1.4 -1.3 0.9 -2.3" stroke="#dc8a1a"/></svg>
<svg class="g" style="left:350px;top:391px" width="8" height="14" viewBox="0 -12 8 14"><path d="M5.4 -9.4 L1.6 -3.0 H6.9 M6.2 -6.2 V0" stroke="#1e66f5"/></svg>
<svg class="g" style="left:382px;top:391px" width="8" height="14" viewBox="0 -12 8 14"><path d="M5.4 -9.4 L1.6 -3.0 H6.9 M6.2 -6.2 V0" stroke="#1e66f5"/></svg>
<svg class="g" style="left:414px;top:391px" width="8" height="14" viewBox="0 -12 8 14"><path d="M5.4 -9.4 L1.6 -3.0 H6.9 M6.2 -6.2 V0" stroke="#1e66f5"/></svg>
<div class="n" style="left:446px;top:389.51px;color:#ea76cb">5</div>
<svg class="g" style="left:478px;top:391px" width="8" height="14" viewBox="0 -12 8 14"><path d="M1.5 -7.0 A2.7 2.4 0 1 0 6.9 -7.0 A2.7 2.4 0 1 0 1.5 -7.0 M6.7 -6.2 L3.0 -0.6" stroke="#d20f39"/></svg>
<div class="n" style="left:510px;top:389.51px;color:#0000a8">1</div>
<svg class="g" style="left:518px;top:391px" width="8" height="14" viewBox="0 -12 8 14"><path d="M1.5 -7.0 A2.7 2.4 0 1 0 6.9 -7.0 A2.7 2.4 0 1 0 1.5 -7.0 M6.7 -6.2 L3.0 -0.6" stroke="#0000a8"/></svg>
<svg class="g" style="left:542px;top:391px" width="8" height="14" viewBox="0 -12 8 14"><path d="M5.4 -9.4 L1.6 -3.0 H6.9 M6.2 -6.2 V0" stroke="#1e66f5"/></svg>
<svg class="g" style="left:574px;top:391px" width="8" height="14" viewBox="0 -12 8 14"><path d="M5.4 -9.4 L1.6 -3.0 H6.9 M6.2 -6.2 V0" stroke="#1e66f5"/></svg>
<svg class="g" style="left:606px;top:391px" width="8" height="14" viewBox="0 -12 8 14"><path d="M0.9 -9.45 H6.3 L3.4 -5.9 H3.8 C5.6 -5.9 6.6 -4.7 6.6 -3.2 C6.6 -1.6 5.4 -0.75 3.7 -0.75 C2.4 -0.75 1.4 -1.3 0.9 -2.3" stroke="#dc8a1a"/></svg>
<svg class="g" style="left:638px;top:391px" width="8" height="14" viewBox="0 -12 8 14"><path d="M0.9 -9.45 H6.3 L3.4 -5.9 H3.8 C5.6 -5.9 6.6 -4.7 6.6 -3.2 C6.6 -1.6 5.4 -0.75 3.7 -0.75 C2.4 -0.75 1.4 -1.3 0.9 -2.3" stroke="#dc8a1a"/></svg>
<div class="n" style="left:30px;top:408.51px;color:#d20f39">1</div>
<div class="n" style="left:62px;top:408.51px;color:#d20f39">1</div>
<div class="n" style="left:94px;top:408.51px;color:#d20f39">1</div>
<div class="n" style="left:126px;top:408.51px;color:#40a02b">2</div>
<div class="n" style="left:158px;top:408.51px;color:#40a02b">2</div>
<div class="n" style="left:190px;top:408.51px;color:#40a02b">2</div>
<svg class="g" style="left:222px;top:410px" width="8" height="14" viewBox="0 -12 8 14"><path d="M0.9 -9.45 H6.3 L3.4 -5.9 H3.8 C5.6 -5.9 6.6 -4.7 6.6 -3.2 C6.6 -1.6 5.4 -0.75 3.7 -0.75 C2.4 -0.75 1.4 -1.3 0.9 -2.3" stroke="#dc8a1a"/></svg>
<svg class="g" style="left:254px;top:410px" width="8" height="14" viewBox="0 -12 8 14"><path d="M0.9 -9.45 H6.3 L3.4 -5.9 H3.8 C5.6 -5.9 6.6 -4.7 6.6 -3.2 C6.6 -1.6 5.4 -0.75 3.7 -0.75 C2.4 -0.75 1.4 -1.3 0.9 -2.3" stroke="#dc8a1a"/></svg>
<svg class="g" style="left:286px;top:410px" width="8" height="14" viewBox="0 -12 8 14"><path d="M0.9 -9.45 H6.3 L3.4 -5.9 H3.8 C5.6 -5.9 6.6 -4.7 6.6 -3.2 C6.6 -1.6 5.4 -0.75 3.7 -0.75 C2.4 -0.75 1.4 -1.3 0.9 -2.3" stroke="#dc8a1a"/></svg>
<svg class="g" style="left:318px;top:410px" width="8" height="14" viewBox="0 -12 8 14"><path d="M0.9 -9.45 H6.3 L3.4 -5.9 H3.8 C5.6 -5.9 6.6 -4.7 6.6 -3.2 C6.6 -1.6 5.4 -0.75 3.7 -0.75 C2.4 -0.75 1.4 -1.3 0.9 -2.3" stroke="#dc8a1a"/></svg>
<svg class="g" style="left:350px;top:410px" width="8" height="14" viewBox="0 -12 8 14"><path d="M0.9 -9.45 H6.3 L3.4 -5.9 H3.8 C5.6 -5.9 6.6 -4.7 6.6 -3.2 C6.6 -1.6 5.4 -0.75 3.7 -0.75 C2.4 -0.75 1.4 -1.3 0.9 -2.3" stroke="#dc8a1a"/></svg>
<svg class="g" style="left:382px;top:410px" width="8" height="14" viewBox="0 -12 8 14"><path d="M0.9 -9.45 H6.3 L3.4 -5.9 H3.8 C5.6 -5.9 6.6 -4.7 6.6 -3.2 C6.6 -1.6 5.4 -0.75 3.7 -0.75 C2.4 -0.75 1.4 -1.3 0.9 -2.3" stroke="#dc8a1a"/></svg>
<svg class="g" style="left:414px;top:410px" width="8" height="14" viewBox="0 -12 8 14"><path d="M5.4 -9.4 L1.6 -3.0 H6.9 M6.2 -6.2 V0" stroke="#1e66f5"/></svg>
<svg class="g" style="left:446px;top:410px" width="8" height="14" viewBox="0 -12 8 14"><path d="M5.4 -9.4 L1.6 -3.0 H6.9 M6.2 -6.2 V0" stroke="#1e66f5"/></svg>
<svg class="g" style="left:478px;top:410px" width="8" height="14" viewBox="0 -12 8 14"><path d="M5.1 -9.4 L1.8 -3.9 M1.5 -3.0 A2.7 2.4 0 1 0 6.9 -3.0 A2.7 2.4 0 1 0 1.5 -3.0" stroke="#168c92"/></svg>
<svg class="g" style="left:510px;top:410px" width="8" height="14" viewBox="0 -12 8 14"><path d="M5.4 -9.4 L1.6 -3.0 H6.9 M6.2 -6.2 V0" stroke="#1e66f5"/></svg>
<svg class="g" style="left:542px;top:410px" width="8" height="14" viewBox="0 -12 8 14"><path d="M0.9 -9.45 H6.3 L3.4 -5.9 H3.8 C5.6 -5.9 6.6 -4.7 6.6 -3.2 C6.6 -1.6 5.4 -0.75 3.7 -0.75 C2.4 -0.75 1.4 -1.3 0.9 -2.3" stroke="#dc8a1a"/></svg>
<svg class="g" style="left:574px;top:410px" width="8" height="14" viewBox="0 -12 8 14"><path d="M0.9 -9.45 H6.3 L3.4 -5.9 H3.8 C5.6 -5.9 6.6 -4.7 6.6 -3.2 C6.6 -1.6 5.4 -0.75 3.7 -0.75 C2.4 -0.75 1.4 -1.3 0.9 -2.3" stroke="#dc8a1a"/></svg>
<div class="n" style="left:606px;top:408.51px;color:#40a02b">2</div>
<div class="n" style="left:638px;top:408.51px;color:#40a02b">2</div>
<div class="n" style="left:30px;top:427.51px;color:#d20f39">1</div>
<div class="n" style="left:62px;top:427.51px;color:#d20f39">1</div>
<div class="n" style="left:94px;top:427.51px;color:#d20f39">1</div>
<div class="n" style="left:126px;top:427.51px;color:#d20f39">1</div>
<div class="n" style="left:158px;top:427.51px;color:#40a02b">2</div>
<div class="n" style="left:190px;top:427.51px;color:#40a02b">2</div>
<div class="n" style="left:222px;top:427.51px;color:#40a02b">2</div>
<div class="n" style="left:254px;top:427.51px;color:#40a02b">2</div>
<svg class="g" style="left:286px;top:429px" width="8" height="14" viewBox="0 -12 8 14"><path d="M0.9 -9.45 H6.3 L3.4 -5.9 H3.8 C5.6 -5.9 6.6 -4.7 6.6 -3.2 C6.6 -1.6 5.4 -0.75 3.7 -0.75 C2.4 -0.75 1.4 -1.3 0.9 -2.3" stroke="#dc8a1a"/></svg>
<svg class="g" style="left:318px;top:429px" width="8" height="14" viewBox="0 -12 8 14"><path d="M0.9 -9.45 H6.3 L3.4 -5.9 H3.8 C5.6 -5.9 6.6 -4.7 6.6 -3.2 C6.6 -1.6 5.4 -0.75 3.7 -0.75 C2.4 -0.75 1.4 -1.3 0.9 -2.3" stroke="#dc8a1a"/></svg>
<svg class="g" style="left:350px;top:429px" width="8" height="14" viewBox="0 -12 8 14"><path d="M0.9 -9.45 H6.3 L3.4 -5.9 H3.8 C5.6 -5.9 6.6 -4.7 6.6 -3.2 C6.6 -1.6 5.4 -0.75 3.7 -0.75 C2.4 -0.75 1.4 -1.3 0.9 -2.3" stroke="#dc8a1a"/></svg>
<svg class="g" style="left:382px;top:429px" width="8" height="14" viewBox="0 -12 8 14"><path d="M0.9 -9.45 H6.3 L3.4 -5.9 H3.8 C5.6 -5.9 6.6 -4.7 6.6 -3.2 C6.6 -1.6 5.4 -0.75 3.7 -0.75 C2.4 -0.75 1.4 -1.3 0.9 -2.3" stroke="#dc8a1a"/></svg>
<svg class="g" style="left:414px;top:429px" width="8" height="14" viewBox="0 -12 8 14"><path d="M0.9 -9.45 H6.3 L3.4 -5.9 H3.8 C5.6 -5.9 6.6 -4.7 6.6 -3.2 C6.6 -1.6 5.4 -0.75 3.7 -0.75 C2.4 -0.75 1.4 -1.3 0.9 -2.3" stroke="#dc8a1a"/></svg>
<svg class="g" style="left:446px;top:429px" width="8" height="14" viewBox="0 -12 8 14"><path d="M0.9 -9.45 H6.3 L3.4 -5.9 H3.8 C5.6 -5.9 6.6 -4.7 6.6 -3.2 C6.6 -1.6 5.4 -0.75 3.7 -0.75 C2.4 -0.75 1.4 -1.3 0.9 -2.3" stroke="#dc8a1a"/></svg>
<svg class="g" style="left:478px;top:429px" width="8" height="14" viewBox="0 -12 8 14"><path d="M0.9 -9.45 H6.3 L3.4 -5.9 H3.8 C5.6 -5.9 6.6 -4.7 6.6 -3.2 C6.6 -1.6 5.4 -0.75 3.7 -0.75 C2.4 -0.75 1.4 -1.3 0.9 -2.3" stroke="#dc8a1a"/></svg>
<svg class="g" style="left:510px;top:429px" width="8" height="14" viewBox="0 -12 8 14"><path d="M0.9 -9.45 H6.3 L3.4 -5.9 H3.8 C5.6 -5.9 6.6 -4.7 6.6 -3.2 C6.6 -1.6 5.4 -0.75 3.7 -0.75 C2.4 -0.75 1.4 -1.3 0.9 -2.3" stroke="#dc8a1a"/></svg>
<div class="n" style="left:542px;top:427.51px;color:#40a02b">2</div>
<div class="n" style="left:574px;top:427.51px;color:#40a02b">2</div>
<div class="n" style="left:606px;top:427.51px;color:#40a02b">2</div>
<div class="n" style="left:638px;top:427.51px;color:#40a02b">2</div>
<svg style="position:absolute;left:693px;top:481px" width="7" height="11" viewBox="0 0 7 11">
<path d="M1.8 2.3 Q4.6 2.2 5.3 3.6 Q6 2.2 8.8 2.3 M5.3 3.4 V11" stroke="#fff" stroke-width="3" fill="none" stroke-linecap="round"/>
<path d="M1.8 2.3 Q4.6 2.2 5.3 3.6 Q6 2.2 8.8 2.3 M5.3 3.4 V11" stroke="#000" stroke-width="1.2" fill="none"/>
</svg>
</div></body></html>
